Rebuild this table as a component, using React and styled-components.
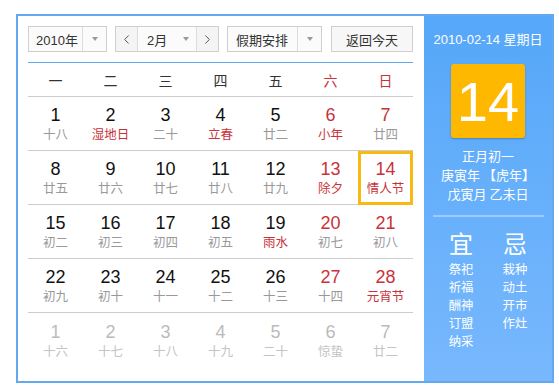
import React from 'react'
import styled, { createGlobalStyle } from 'styled-components'
import { ChevronLeft, ChevronRight } from 'lucide-react'

const GlobalStyle = createGlobalStyle`
  html, body { margin: 0; padding: 0; background: #fff; }
  body { font-family: Arial, "Liberation Sans", "Noto Sans CJK SC", sans-serif; }
`

const Frame = styled.div`
  display: flex;
  width: 534px;
  height: 365px;
  margin: 14px 0 0 16px;
  border: 2px solid #62a9ef;
  background: #fff;
`

const Main = styled.div`
  width: 385px;
  padding: 10px 11px 0 10px;
  display: flex;
  flex-direction: column;
`

const Toolbar = styled.div`
  display: flex;
  height: 26px;
  gap: 8px;
  margin-bottom: 10px;
`

const Select = styled.div`
  display: flex;
  width: ${p => p.w}px;
  box-sizing: border-box;
  border: 1px solid #cfcfcf;
  background: #fbfbfb;
  font-size: 13px;
  color: #333;
`

const SelectText = styled.div`
  flex: 1;
  display: flex;
  align-items: center;
  padding-left: ${p => p.pl || 7}px;
`

const ArrowBox = styled.div`
  width: ${p => p.w || 23}px;
  display: flex;
  align-items: center;
  justify-content: center;
  border-left: ${p => (p.plain ? 'none' : '1px solid #dcdcdc')};
  &::after {
    content: '';
    border-left: 3.5px solid transparent;
    border-right: 3.5px solid transparent;
    border-top: 4px solid #999;
  }
`

const NavBtn = styled.div`
  width: 21px;
  display: flex;
  align-items: center;
  justify-content: center;
  background: #f4f4f4;
  border-${p => p.side}: 1px solid #dcdcdc;
  color: #555;
`

const Button = styled.div`
  width: 82px;
  box-sizing: border-box;
  border: 1px solid #cfcfcf;
  background: #f7f7f7;
  display: flex;
  align-items: center;
  justify-content: center;
  font-size: 13px;
  color: #333;
  margin-left: auto;
`

const Grid = styled.div`
  display: grid;
  grid-template-columns: repeat(7, 55px);
  border-top: 1px solid #62a9ef;
`

const Weekday = styled.div`
  height: 33px;
  display: flex;
  align-items: center;
  justify-content: center;
  font-size: 14px;
  color: ${p => (p.red ? '#c9323b' : '#333')};
  border-bottom: 1px solid #ccc;
`

const Cell = styled.div`
  height: ${p => (p.last ? 55 : 54)}px;
  box-sizing: border-box;
  display: flex;
  flex-direction: column;
  align-items: center;
  justify-content: center;
  border-bottom: ${p => (p.last ? 'none' : '1px solid #ccc')};
  ${p => p.selected && 'outline: 3px solid #f8ba11; outline-offset: -3px; border-bottom-color: transparent;'}
`

const DayNum = styled.div`
  font-size: 18px;
  line-height: 20px;
  color: ${p => (p.dim ? '#bbb' : p.red ? '#c9323b' : '#111')};
`

const Lunar = styled.div`
  font-size: 12.5px;
  line-height: 17px;
  font-family: "Noto Sans CJK SC", sans-serif;
  color: ${p => (p.dim ? '#c4c4c4' : p.red ? '#c9323b' : '#999')};
`

const Side = styled.div`
  width: 129px;
  background: linear-gradient(#55a7f9, #78b8fd);
  color: #fff;
  display: flex;
  flex-direction: column;
  align-items: center;
  font-family: "Noto Sans CJK SC", sans-serif;
`

const DateLine = styled.div`
  font-size: 13px;
  margin-top: 14px;
  line-height: 20px;
  font-family: Arial, "Liberation Sans", "Noto Sans CJK SC", sans-serif;
`

const BigDay = styled.div`
  width: 74px;
  height: 74px;
  margin-top: 14px;
  background: #ffb800;
  border-radius: 3px;
  box-shadow: 0 1px 2px rgba(0, 0, 0, 0.25);
  display: flex;
  align-items: center;
  justify-content: center;
  font-size: 56px;
  font-family: Arial, "Liberation Sans", sans-serif;
`

const LunarInfo = styled.div`
  margin-top: 8px;
  font-size: 13px;
  line-height: 19px;
  text-align: center;
`

const Divider = styled.div`
  width: 111px;
  height: 2px;
  background: rgba(255, 255, 255, 0.35);
  margin-top: 12px;
`

const Advice = styled.div`
  display: flex;
  gap: 29px;
  margin-top: 12px;
`

const AdviceCol = styled.div`
  display: flex;
  flex-direction: column;
  align-items: center;
`

const AdviceHead = styled.div`
  font-size: 24px;
  line-height: 28px;
  margin-bottom: 3px;
`

const AdviceItem = styled.div`
  font-size: 12.4px;
  line-height: 18px;
`

const weekdays = ['一', '二', '三', '四', '五', '六', '日']

const days = [
  ['1', '十八'], ['2', '湿地日', 'l'], ['3', '二十'], ['4', '立春', 'l'], ['5', '廿二'], ['6', '小年', 'b'], ['7', '廿四', 'd'],
  ['8', '廿五'], ['9', '廿六'], ['10', '廿七'], ['11', '廿八'], ['12', '廿九'], ['13', '除夕', 'b'], ['14', '情人节', 'b'],
  ['15', '初二'], ['16', '初三'], ['17', '初四'], ['18', '初五'], ['19', '雨水', 'l'], ['20', '初七', 'd'], ['21', '初八', 'd'],
  ['22', '初九'], ['23', '初十'], ['24', '十一'], ['25', '十二'], ['26', '十三'], ['27', '十四', 'd'], ['28', '元宵节', 'b'],
  ['1', '十六', 'x'], ['2', '十七', 'x'], ['3', '十八', 'x'], ['4', '十九', 'x'], ['5', '二十', 'x'], ['6', '惊蛰', 'x'], ['7', '廿二', 'x'],
]

export default function App() {
  return (
    <>
      <GlobalStyle />
      <Frame>
        <Main>
          <Toolbar>
            <Select w={79}>
              <SelectText>2010年</SelectText>
              <ArrowBox />
            </Select>
            <Select w={104}>
              <NavBtn side="right"><ChevronLeft size={15} strokeWidth={1.6} /></NavBtn>
              <SelectText pl={9}>2月</SelectText>
              <ArrowBox plain w={20} />
              <NavBtn side="left"><ChevronRight size={15} strokeWidth={1.6} /></NavBtn>
            </Select>
            <Select w={95}>
              <SelectText pl={8}>假期安排</SelectText>
              <ArrowBox />
            </Select>
            <Button>返回今天</Button>
          </Toolbar>
          <Grid>
            {weekdays.map((w, i) => (
              <Weekday key={w} red={i >= 5}>{w}</Weekday>
            ))}
            {days.map(([d, l, t], i) => {
              const dim = t === 'x'
              const redNum = t === 'b' || t === 'd'
              const redLunar = t === 'b' || t === 'l'
              return (
                <Cell key={i} last={i >= 28} selected={i === 13}>
                  <DayNum dim={dim} red={redNum}>{d}</DayNum>
                  <Lunar dim={dim} red={redLunar}>{l}</Lunar>
                </Cell>
              )
            })}
          </Grid>
        </Main>
        <Side>
          <DateLine>2010-02-14 星期日</DateLine>
          <BigDay>14</BigDay>
          <LunarInfo>
            正月初一<br />
            庚寅年 【虎年】<br />
            戊寅月 乙未日
          </LunarInfo>
          <Divider />
          <Advice>
            <AdviceCol>
              <AdviceHead>宜</AdviceHead>
              {['祭祀', '祈福', '酬神', '订盟', '纳采'].map(s => <AdviceItem key={s}>{s}</AdviceItem>)}
            </AdviceCol>
            <AdviceCol>
              <AdviceHead>忌</AdviceHead>
              {['栽种', '动土', '开市', '作灶'].map(s => <AdviceItem key={s}>{s}</AdviceItem>)}
            </AdviceCol>
          </Advice>
        </Side>
      </Frame>
    </>
  )
}
